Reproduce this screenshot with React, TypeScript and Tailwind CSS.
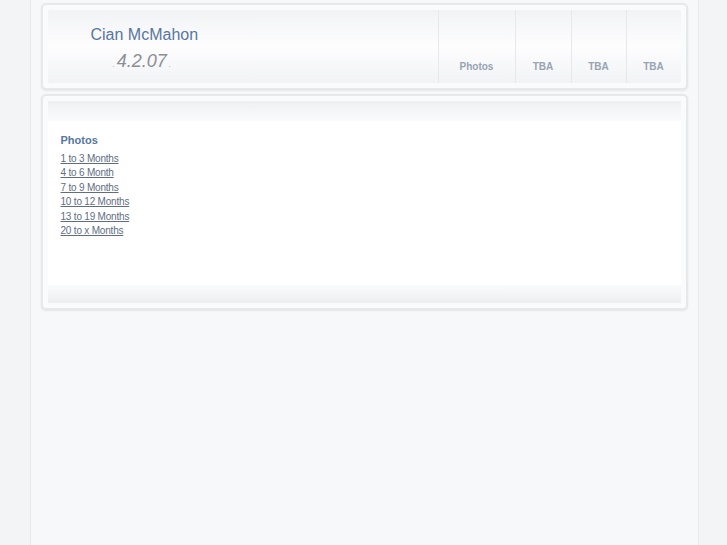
export default function App() {
  const links = ["1 to 3 Months", "4 to 6 Month", "7 to 9 Months", "10 to 12 Months", "13 to 19 Months", "20 to x Months"];
  return (
    <div className="w-[727px] h-[545px] bg-[#f3f4f6] flex justify-center" style={{ fontFamily: '"Liberation Sans", Arial, sans-serif' }}>
      <div className="w-[669px] h-full bg-[#f7f8f9] border-x border-[#e8eaec] ml-[1px] px-[10px] pt-[3px]">
        <div className="h-[87px] rounded-[5px] border-2 border-[#e6e8ea] bg-[#fafbfc] shadow-[0_1px_2px_rgba(0,0,0,0.08)] p-[5px] flex">
          <div className="flex-1 flex bg-gradient-to-b from-[#f2f3f5] via-[#fdfdfe] to-[#f2f3f5] rounded-[3px]">
            <div className="w-[390px] pl-[43px] pt-[15px]">
              <div className="text-[16px] leading-[20px] text-[#5876a0]">Cian McMahon</div>
              <div className="pl-[22px] mt-[4px] text-[18px] leading-[24px] italic text-[#8c8f94] flex items-baseline gap-[2px]">
                <span className="text-[8px]">.</span>4.2.07<span className="text-[8px]">.</span>
              </div>
            </div>
            {[["Photos", 77], ["TBA", 56], ["TBA", 55], ["TBA", 55]].map(([t, w], i) => (
              <div key={i} style={{ width: w as number }} className="border-l border-[#e6e8ea] flex items-end justify-center pb-[9px] text-[10px] font-bold text-[#97a3b3]">{t}</div>
            ))}
          </div>
        </div>
        <div className="mt-[4px] h-[216px] rounded-[5px] border-2 border-[#e6e8ea] bg-[#fafbfc] shadow-[0_1px_2px_rgba(0,0,0,0.08)] p-[5px]">
          <div className="h-full flex flex-col rounded-[3px]">
            <div className="h-[20px] bg-gradient-to-b from-[#eef0f2] to-[#fafbfc]" />
            <div className="flex-1 bg-white pl-[13px] pt-[11px]">
              <div className="text-[11px] font-bold text-[#5577a0] mb-[3px]">Photos</div>
              {links.map(l => (
                <div key={l} className="text-[10px] leading-[14.6px] text-[#5f6d82] underline tracking-[-0.2px]">{l}</div>
              ))}
            </div>
            <div className="h-[18px] bg-gradient-to-b from-[#fafbfc] to-[#eceef0]" />
          </div>
        </div>
      </div>
    </div>
  );
}
